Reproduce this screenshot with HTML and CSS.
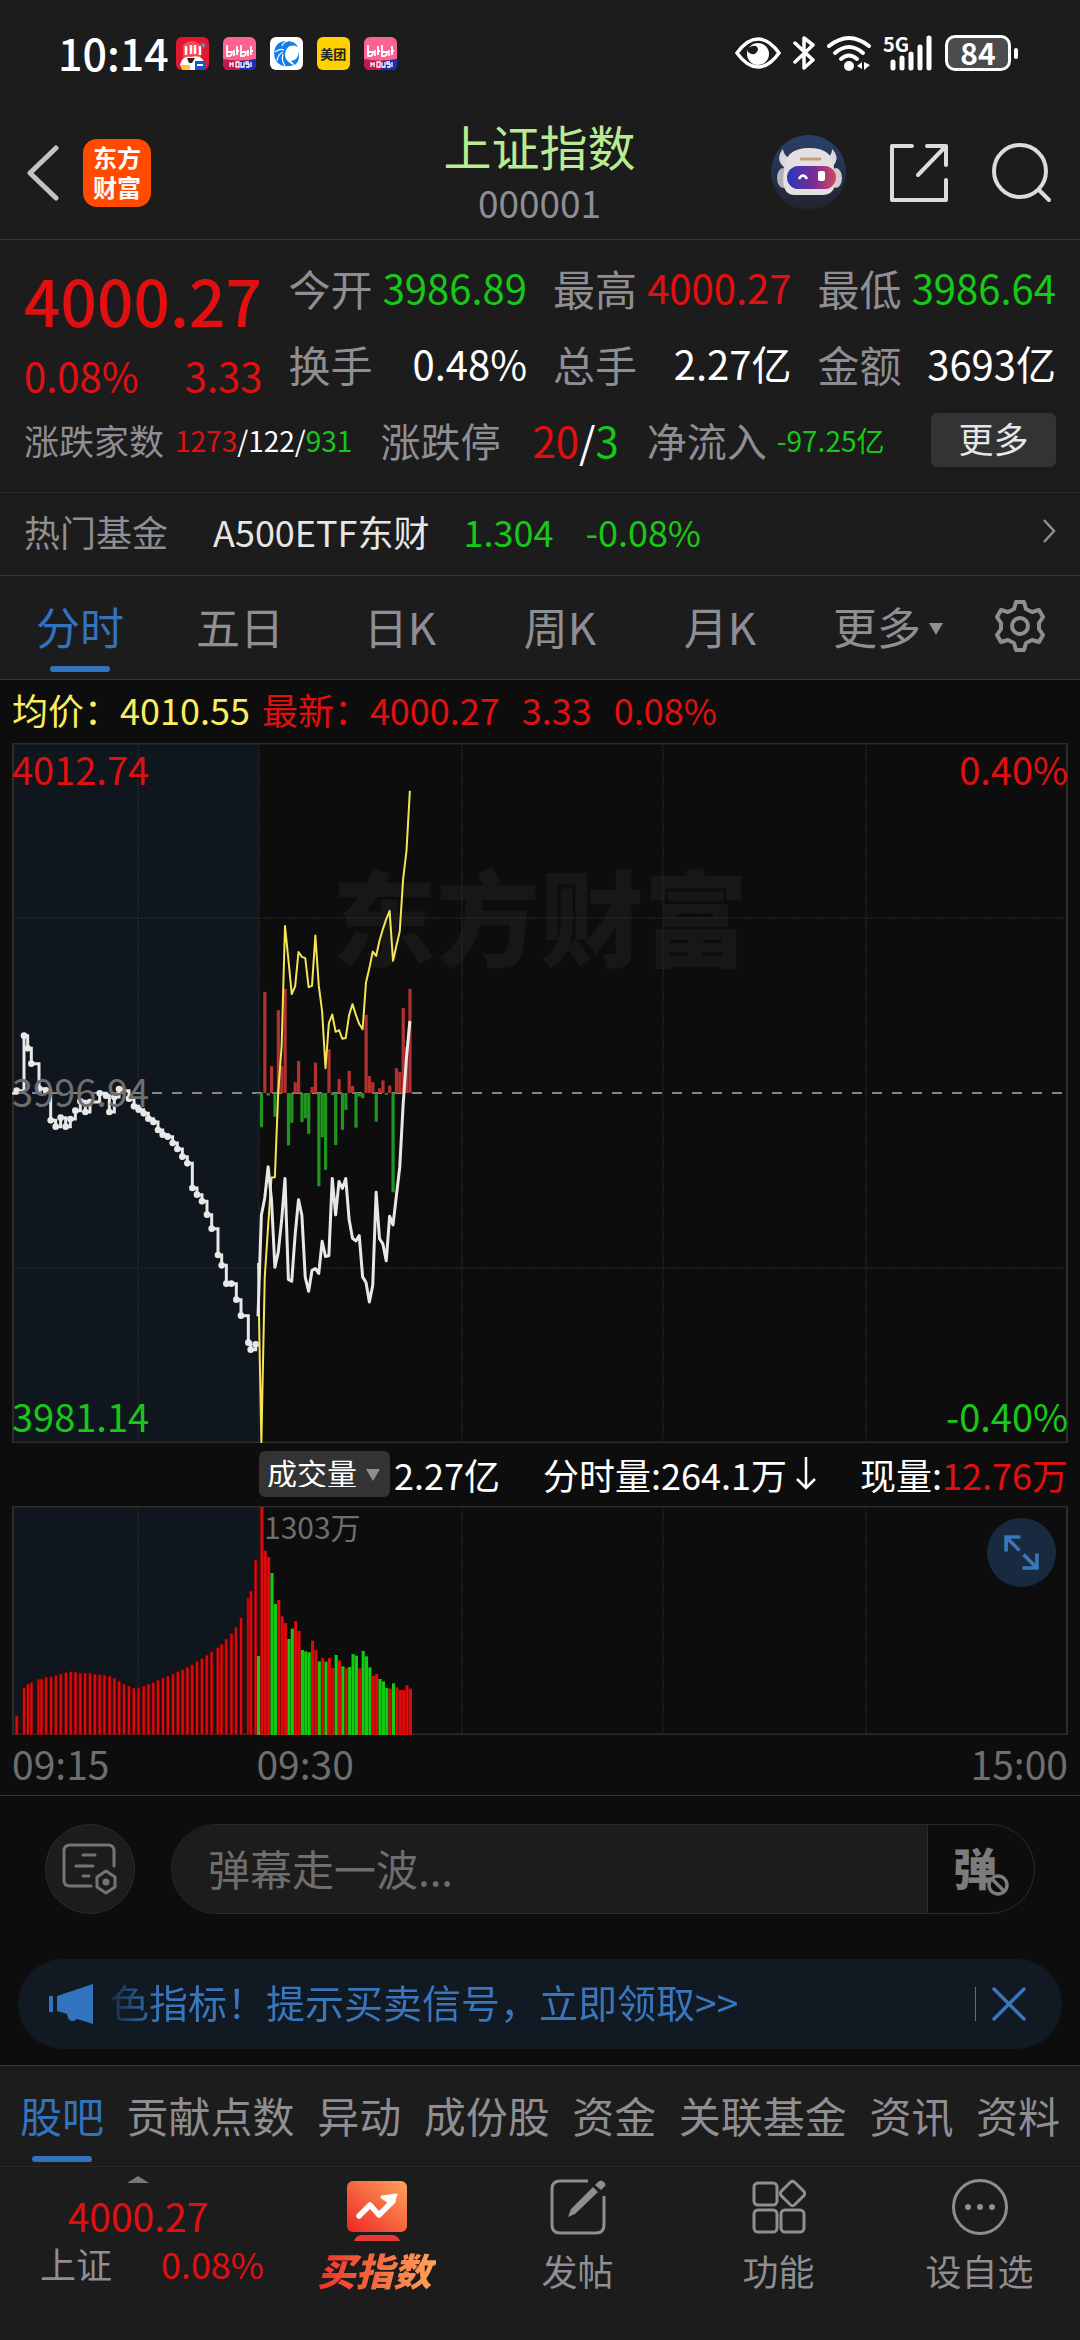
FILE: index.html
```html
<!DOCTYPE html>
<html lang="zh-CN">
<head>
    <meta charset="UTF-8">
    <meta name="viewport" content="width=device-width, initial-scale=1.0">
    <title>上证指数 000001</title>
    <link rel="stylesheet" href="styles.css">
</head>
<body>
    <div class="status-bar">
        <span class="clock">10:14</span>
        <div class="app-icons">
            <svg viewBox="0 0 33 33"><rect width="33" height="33" rx="6" fill="#e5172f"/><path d="M7 8Q16 0 25 8V20H7z" fill="#f5495a"/><path d="M10 9v9M15 8v9M19 8v9M24 9v9" stroke="#fff" stroke-width="2.5"/><path d="M4 28Q6 18 15 20Q27 17 29 28L26 33H7z" fill="#fff"/><path d="M11 21h8l-3 5h-3z" fill="#35211f"/><path d="M5 28h9v5H7q-2-1-2-5z" fill="#ffc62d"/><path d="M19 24h10v9H19z" fill="#1756c9"/><path d="M21 28h6" stroke="#fff" stroke-width="2"/><path d="M25 6l4 1-1 5z" fill="#4ca0e6"/></svg>
            <svg viewBox="0 0 33 33"><rect width="33" height="33" rx="6" fill="#fb6390"/><path d="M0 22q16 3 33 0v5q0 6-6 6H6q-6 0-6-6z" fill="#c51650"/><path d="M17 24q8 0 16-2v5q0 6-6 6H17z" fill="#1730b8"/><path d="M4 8v11q5 1 5-4H4M11 13v6M14 9v9M13 14h3M18 8v11q5 1 5-4h-5M25 13v6M28 9v9M27 14h3" stroke="#fff" stroke-width="1.8" fill="none"/><path d="M7 25v5M7 27h3M10 25v5M13 25h3v5h-3zM18 25v5h3v-5M26 25h-3v2h3v3h-3M28 25v5" stroke="#fff" stroke-width="1.3" fill="none"/></svg>
            <svg viewBox="0 0 33 33"><rect width="33" height="33" rx="6" fill="#fff"/><path d="M4 16Q5 4 17 4Q25 4 28 10Q20 6 16 13Q12 23 24 28Q12 32 6 24Q4 20 4 16z" fill="#137ee8"/><path d="M5 15q5-4 9-2M7 24q1-7 6-9M15 29q-4-6-2-12M18 4q-5 1-6 5" stroke="#fff" stroke-width="1.2" fill="none"/><path d="M21 24q8-1 7-9q3 8-3 13z" fill="#137ee8"/></svg>
            <span class="app-meituan">美团</span>
            <svg viewBox="0 0 33 33"><rect width="33" height="33" rx="6" fill="#fb6390"/><path d="M0 22q16 3 33 0v5q0 6-6 6H6q-6 0-6-6z" fill="#c51650"/><path d="M17 24q8 0 16-2v5q0 6-6 6H17z" fill="#1730b8"/><path d="M4 8v11q5 1 5-4H4M11 13v6M14 9v9M13 14h3M18 8v11q5 1 5-4h-5M25 13v6M28 9v9M27 14h3" stroke="#fff" stroke-width="1.8" fill="none"/><path d="M7 25v5M7 27h3M10 25v5M13 25h3v5h-3zM18 25v5h3v-5M26 25h-3v2h3v3h-3M28 25v5" stroke="#fff" stroke-width="1.3" fill="none"/></svg>
        </div>
        <div class="system-icons">
            <svg width="46" height="34" viewBox="0 0 46 34"><path d="M2 17Q12 3 23 3T44 17Q34 31 23 31T2 17z" fill="none" stroke="#fff" stroke-width="3.5"/><circle cx="23" cy="18" r="11" fill="#fff"/><path d="M13 12q5-3 8-2 4 3 0 7-3 3-8-1z" fill="#1c1c1c"/></svg>
            <svg width="22" height="36" viewBox="0 0 22 36"><path d="M2 8l18 17-9 8V3l9 7L2 27" fill="none" stroke="#fff" stroke-width="3.5" stroke-linejoin="round" stroke-linecap="round"/></svg>
            <svg width="44" height="36" viewBox="0 0 44 36"><g fill="none" stroke="#fff" stroke-width="4" stroke-linecap="round"><path d="M2 11q20-16 40 0"/><path d="M8 18q14-12 28 0"/><path d="M14 24q8-7 16 0"/></g><circle cx="22" cy="31" r="5" fill="#fff"/><path d="M30 31l5-4v7zM37 27v8l6-5z" fill="#fff"/></svg>
            <div class="signal">
                <span class="signal-type">5G</span>
                <svg width="50" height="36" viewBox="0 0 50 36"><path d="M10 27v6M19 23v10M28 19v14M37 12v21M46 3v30" stroke="#fff" stroke-width="5" stroke-linecap="round"/></svg>
            </div>
            <div class="battery"><span>84</span></div>
        </div>
    </div>

    <header class="header">
        <div class="header-left">
            <button class="icon-btn" aria-label="返回"><svg width="32" height="56" viewBox="0 0 32 56"><path d="M29 3L3 28l26 25" fill="none" stroke="#c3c3c3" stroke-width="5" stroke-linecap="round" stroke-linejoin="round"/></svg></button>
            <a class="logo" href="#"><span>东方</span><span>财富</span></a>
        </div>
        <div class="header-title">
            <h1>上证指数</h1>
            <p>000001</p>
        </div>
        <div class="header-right">
            <button class="icon-btn robot" aria-label="智能助手">
                <svg width="75" height="75" viewBox="0 0 75 75">
                    <defs>
                        <linearGradient id="robotBg" x1="0" y1="0" x2="0" y2="1"><stop offset="0" stop-color="#2b4068"/><stop offset="1" stop-color="#20232c"/></linearGradient>
                        <linearGradient id="visor"><stop offset="0" stop-color="#2836b8"/><stop offset=".55" stop-color="#7a2d96"/><stop offset="1" stop-color="#d04860"/></linearGradient>
                    </defs>
                    <circle cx="37.500" cy="37.500" r="37.500" fill="url(#robotBg)"/>
                    <path d="M12 14q-9 11 3 20l10-10q-12 0-13-10zM61 14q10 10-2 20L49 24q12 0 12-10z" fill="#d8d5dc"/>
                    <ellipse cx="12" cy="43" rx="6" ry="10" fill="#b3b0ba"/><ellipse cx="65" cy="43" rx="6" ry="10" fill="#d0ccd2"/>
                    <path d="M13 36Q13 13 38 13T63 34Q68 60 52 60H24Q9 60 13 36z" fill="#e3e0e4"/>
                    <rect x="16" y="31" width="49" height="23" rx="11.500" fill="url(#visor)"/>
                    <path d="M29 24h21" stroke="#cc9a7c" stroke-width="3"/>
                    <path d="M28 44q4-7 8 0" fill="none" stroke="#fff" stroke-width="2.500"/>
                    <rect x="47" y="36" width="7" height="10" rx="2" fill="#fff"/>
                </svg>
            </button>
            <button class="icon-btn" aria-label="分享"><svg width="58" height="58" viewBox="0 0 58 58"><path d="M22 2H2v54h54V36M37 2h19v19M55 3L28 31" fill="none" stroke="#dcdcdc" stroke-width="4" stroke-linecap="round" stroke-linejoin="round"/></svg></button>
            <button class="icon-btn" aria-label="搜索"><svg width="60" height="60" viewBox="0 0 60 60"><circle cx="28" cy="28" r="26" fill="none" stroke="#dcdcdc" stroke-width="4"/><path d="M47 47l10 10" stroke="#dcdcdc" stroke-width="4" stroke-linecap="round"/></svg></button>
        </div>
    </header>

    <section class="quote">
        <div class="quote-top">
            <div class="quote-price">
                <strong class="price up">4000.27</strong>
                <div class="price-change up"><span>0.08%</span><span>3.33</span></div>
            </div>
            <dl class="quote-stats">
                <div><dt>今开</dt><dd class="down">3986.89</dd></div>
                <div><dt>最高</dt><dd class="up">4000.27</dd></div>
                <div><dt>最低</dt><dd class="down">3986.64</dd></div>
                <div><dt>换手</dt><dd>0.48%</dd></div>
                <div><dt>总手</dt><dd>2.27亿</dd></div>
                <div><dt>金额</dt><dd>3693亿</dd></div>
            </dl>
        </div>
        <div class="breadth">
            <span class="breadth-label">涨跌家数</span>
            <span class="breadth-small"><span class="up">1273</span>/122/<span class="down">931</span></span>
            <span class="breadth-name">涨跌停</span>
            <span class="breadth-limit"><span class="up">20</span>/<span class="down">3</span></span>
            <span class="breadth-name">净流入</span>
            <span class="breadth-small down">-97.25亿</span>
            <button class="more-btn">更多</button>
        </div>
    </section>

    <a class="fund" href="#">
        <span class="fund-label">热门基金</span>
        <span class="fund-name">A500ETF东财</span>
        <span class="down">1.304</span>
        <span class="down fund-rate">-0.08%</span>
        <svg class="fund-arrow" width="14" height="26" viewBox="0 0 14 26"><path d="M2 2l10 11L2 24" fill="none" stroke="#8e8e93" stroke-width="2.500"/></svg>
    </a>

    <nav class="period-tabs">
        <button class="active">分时</button>
        <button>五日</button>
        <button>日K</button>
        <button>周K</button>
        <button>月K</button>
        <button class="more-tab">更多<i class="caret"></i></button>
        <button class="settings" aria-label="设置"><svg width="52" height="52" viewBox="0 0 52 52"><path d="M22 2h8l2 7 6 3 7-2 4 7-4 6v6l4 6-4 7-7-2-6 3-2 7h-8l-2-7-6-3-7 2-4-7 4-6v-6l-4-6 4-7 7 2 6-3z" fill="none" stroke="#8e8e93" stroke-width="4" stroke-linejoin="round"/><circle cx="26" cy="26" r="8" fill="none" stroke="#8e8e93" stroke-width="4"/></svg></button>
    </nav>

    <main class="chart">
        <div class="chart-info">
            <span class="avg">均价：4010.55</span>
            <span class="up">最新：4000.27</span>
            <span class="up chart-gap">3.33</span>
            <span class="up chart-gap">0.08%</span>
        </div>

        <div class="plot">
            <span class="watermark">东方财富</span>
            <svg id="priceChart" viewBox="0 0 1056 700"></svg>
            <span class="axis top left up">4012.74</span>
            <span class="axis top right up">0.40%</span>
            <span class="axis middle left">3996.94</span>
            <span class="axis bottom left down">3981.14</span>
            <span class="axis bottom right down">-0.40%</span>
        </div>

        <div class="volume-info">
            <span class="select-wrap">
                <select aria-label="指标"><option>成交量</option></select>
                <i class="caret"></i>
            </span>
            <span>2.27亿</span>
            <span class="minute-volume">分时量:264.1万<svg width="22" height="34" viewBox="0 0 22 34"><path d="M11 0v31M2 22l9 9 9-9" fill="none" stroke="#fff" stroke-width="2.500"/></svg></span>
            <span class="last-volume">现量:<span class="up">12.76万</span></span>
        </div>

        <div class="plot">
            <svg id="volumeChart" viewBox="0 0 1056 229"></svg>
            <span class="volume-max">1303万</span>
            <button class="expand" aria-label="全屏"><svg width="34" height="34" viewBox="0 0 34 34"><path d="M2 16V2h14M2 2l13 13M32 18v14H18M32 32L19 19" fill="none" stroke="#3a76bd" stroke-width="3.500"/></svg></button>
        </div>

        <div class="time-axis"><span>09:15</span><span class="open-time">09:30</span><span>15:00</span></div>
    </main>

    <div class="danmaku">
        <button class="danmaku-list" aria-label="弹幕设置"><svg width="56" height="52" viewBox="0 0 56 52"><g fill="none" stroke="#747474" stroke-width="3" stroke-linecap="round"><path d="M29 43H8q-6 0-6-6V8q0-6 6-6h38q6 0 6 6v15M21 12h12M14 23h17M21 33h6"/><path d="M44 28l9 6v10l-9 6-9-6V34z" stroke-linejoin="round"/></g><circle cx="44" cy="39" r="3.500" fill="#747474"/></svg></button>
        <div class="danmaku-box">
            <input type="text" aria-label="弹幕" placeholder="弹幕走一波...">
            <button class="danmaku-toggle" aria-label="关闭弹幕">弹<svg width="24" height="24" viewBox="0 0 24 24"><circle cx="12" cy="12" r="9" fill="#0d0d0d" stroke="#7c7c7c" stroke-width="3.500"/><path d="M6 6l12 12" stroke="#7c7c7c" stroke-width="3.500"/></svg></button>
        </div>
    </div>

    <div class="notice">
        <svg width="46" height="40" viewBox="0 0 46 40"><path d="M45 0v40L29 35q-6 5-9-1l-1-4-10-3V12zM1 12h4v16H1z" fill="#3273c0"/></svg>
        <a class="notice-text" href="#">色指标！提示买卖信号，立即领取&gt;&gt;</a>
        <button class="notice-close" aria-label="关闭"><svg width="34" height="34" viewBox="0 0 34 34"><path d="M2 2l30 30M32 2L2 32" stroke="#3a76bd" stroke-width="3.500" stroke-linecap="round"/></svg></button>
    </div>

    <nav class="section-tabs">
        <a class="active" href="#">股吧</a>
        <a href="#">贡献点数</a>
        <a href="#">异动</a>
        <a href="#">成份股</a>
        <a href="#">资金</a>
        <a href="#">关联基金</a>
        <a href="#">资讯</a>
        <a href="#">资料</a>
    </nav>

    <footer class="bottom-bar">
        <div class="index-summary">
            <i class="caret-up"></i>
            <span class="index-price up">4000.27</span>
            <div class="index-row"><span>上证</span><span class="up">0.08%</span></div>
        </div>
        <button class="buy">
            <svg width="60" height="60" viewBox="0 0 60 60">
                <defs><linearGradient id="buyBg" x1="0" y1="1" x2="1" y2="0"><stop offset="0" stop-color="#ee2525"/><stop offset="1" stop-color="#ffa45a"/></linearGradient></defs>
                <rect y="0" width="60" height="51" rx="6" fill="url(#buyBg)"/>
                <path d="M7 60q2-6 8-6h30q6 0 8 6z" fill="#e63a32"/>
                <path d="M12 35l11-11 9 10 14-14" fill="none" stroke="#fff" stroke-width="5.500" stroke-linecap="round" stroke-linejoin="round"/><path d="M35 16l14-2-4 9z" fill="#fff" stroke="#fff" stroke-width="3" stroke-linejoin="round"/>
            </svg>
            <span>买指数</span>
        </button>
        <button>
            <svg width="56" height="60" viewBox="0 0 56 60"><path d="M38 2H10q-8 0-8 8v36q0 8 8 8h36q8 0 8-8V17" fill="none" stroke="#8e8e93" stroke-width="3"/><path d="M18 38l3-8 22-22 5 5-23 22zM45 6l3-3q3-3 6 0t0 5l-3 3z" fill="#8e8e93"/></svg>
            <span>发帖</span>
        </button>
        <button>
            <svg width="56" height="60" viewBox="0 0 56 60"><g fill="none" stroke="#8e8e93" stroke-width="3"><rect x="3" y="4" width="23" height="22" rx="4"/><rect x="3" y="31" width="23" height="22" rx="4"/><rect x="30" y="31" width="23" height="22" rx="4"/><rect x="32" y="5" width="19" height="19" rx="3" transform="rotate(45 41.500 14.500)"/></g></svg>
            <span>功能</span>
        </button>
        <button>
            <svg width="56" height="60" viewBox="0 0 56 60"><circle cx="28" cy="28" r="26.500" fill="none" stroke="#8e8e93" stroke-width="3"/><g fill="#8e8e93"><circle cx="16" cy="28" r="3"/><circle cx="28" cy="28" r="3"/><circle cx="40" cy="28" r="3"/></g></svg>
            <span>设自选</span>
        </button>
    </footer>

    <script src="chart.js"></script>
</body>
</html>
```

FILE: styles.css
```css
* {
    box-sizing: border-box;
}
body {
    margin: 0;
    background: #0d0d0d;
    color: #fff;
    font-family: "Noto Sans CJK SC", "Noto Sans", sans-serif;
    font-size: 36px;
    line-height: 1;
}
h1, p, dl, dd {
    margin: 0;
}
button, input, select {
    font-family: inherit;
    color: inherit;
    line-height: inherit;
    border: none;
    background: none;
    padding: 0;
    margin: 0;
    border-radius: 0;
}
a {
    color: inherit;
    text-decoration: none;
}
svg {
    display: block;
    flex: none;
}
.up { color: #e01010; }
.down { color: #18c818; }
.caret {
    display: inline-block;
    border: 7px solid transparent;
    border-top: 12px solid #8e8e93;
    border-bottom: none;
}

/* status bar */
.status-bar {
    display: flex;
    align-items: center;
    height: 106px;
    padding: 0 69px 0 58px;
    background: #1c1c1c;
}
.clock {
    font-size: 43px;
    font-weight: 500;
    padding-bottom: 2px;
}
.app-icons {
    display: flex;
    gap: 14px;
    margin-left: 7px;
}
.app-icons svg,
.app-meituan {
    width: 33px;
    height: 33px;
}
.app-meituan {
    background: #ffd100;
    color: #222;
    border-radius: 6px;
    font-size: 13px;
    font-weight: bold;
    line-height: 33px;
    text-align: center;
}
.system-icons {
    display: flex;
    align-items: center;
    gap: 12px;
    margin-left: auto;
}
.signal {
    position: relative;
}
.signal-type {
    position: absolute;
    left: 0;
    top: 0;
    font-size: 20px;
    line-height: 18px;
    font-weight: bold;
}
.battery {
    position: relative;
    width: 66px;
    height: 36px;
    border: 3px solid #fff;
    border-radius: 10px;
    background: #4c4c4c;
    font-size: 30px;
    line-height: 28px;
    font-weight: bold;
    text-align: center;
}
.battery::after {
    content: "";
    position: absolute;
    right: -10px;
    top: 10px;
    width: 4px;
    height: 11px;
    border-radius: 2px;
    background: #fff;
}

/* header */
.header {
    display: grid;
    grid-template-columns: 1fr auto 1fr;
    align-items: center;
    height: 134px;
    padding: 0 28px 0 27px;
    background: #1c1c1c;
    border-bottom: 1px solid #363636;
}
.header-left,
.header-right {
    display: flex;
    align-items: center;
}
.header-left {
    gap: 24px;
}
.header-right {
    justify-content: flex-end;
    gap: 44px;
}
.logo {
    display: flex;
    flex-direction: column;
    align-items: center;
    width: 68px;
    height: 68px;
    padding: 3px 0;
    border-radius: 14px;
    background: #ff4a00;
    font-size: 24px;
    line-height: 30px;
    font-weight: bold;
}
.header-title {
    padding-bottom: 2px;
    text-align: center;
}
.header-title h1 {
    font-size: 48px;
    line-height: 60px;
    font-weight: normal;
    color: #b9eb92;
}
.header-title p {
    color: #8e8e93;
    font-size: 37px;
    line-height: 54px;
}

/* quote */
.quote {
    padding: 10px 24px 15px;
    background: #1c1c1c;
    border-bottom: 1px solid #282828;
}
.quote-top {
    display: grid;
    grid-template-columns: repeat(4, minmax(0, 1fr));
    column-gap: 26px;
    white-space: nowrap;
}
.price {
    display: block;
    font-size: 64px;
    line-height: 98px;
    font-weight: 500;
}
.price-change {
    display: flex;
    justify-content: space-between;
    font-size: 40px;
    line-height: 54px;
}
.quote-stats {
    display: grid;
    grid-column: span 3;
    grid-template-columns: repeat(3, minmax(0, 1fr));
    column-gap: 26px;
    font-size: 40px;
    line-height: 75px;
}
.quote-stats div {
    display: flex;
    justify-content: space-between;
}
.quote-stats dt {
    font-size: 42px;
    color: #8e8e93;
}
.breadth {
    display: flex;
    align-items: center;
    height: 75px;
    white-space: nowrap;
}
.breadth-label {
    font-size: 35px;
    color: #8e8e93;
    margin-right: 11px;
}
.breadth-small {
    font-size: 28px;
}
.breadth-name {
    font-size: 40px;
    color: #8e8e93;
    margin: 0 10px 0 28px;
}
.breadth-limit {
    font-size: 42px;
    margin-left: 22px;
}
.more-btn {
    width: 125px;
    height: 54px;
    margin-left: auto;
    padding-bottom: 4px;
    border-radius: 6px;
    background: #333;
    color: #e6e6e6;
    font-size: 35px;
}

/* hot fund */
.fund {
    display: flex;
    align-items: center;
    height: 83px;
    padding: 0 24px 6px;
    background: #1c1c1c;
    border-bottom: 1px solid #363636;
}
.fund-label {
    color: #8e8e93;
    margin-right: 45px;
}
.fund-name {
    color: #e6e6e6;
    margin-right: 34px;
}
.fund-rate {
    margin-left: 32px;
}
.fund-arrow {
    margin-left: auto;
}

/* period tabs */
.period-tabs {
    display: flex;
    height: 104px;
    background: #1c1c1c;
    border-bottom: 1px solid #363636;
}
.period-tabs button {
    position: relative;
    flex: 4;
    padding-bottom: 4px;
    font-size: 44px;
    color: #8e8e93;
    white-space: nowrap;
}
.period-tabs .more-tab {
    text-indent: 16px;
}
.period-tabs .caret {
    margin-left: 8px;
    vertical-align: 10px;
}
.period-tabs .settings {
    display: flex;
    flex: 3;
    align-items: center;
    justify-content: center;
}
.period-tabs .active,
.section-tabs .active {
    color: #3273c0;
}
.period-tabs .active::after,
.section-tabs .active::after {
    content: "";
    position: absolute;
    left: 50%;
    bottom: 7px;
    width: 60px;
    height: 6px;
    margin-left: -30px;
    border-radius: 3px;
    background: #3273c0;
}

/* chart */
.chart {
    padding: 0 12px;
    border-bottom: 1px solid #363636;
}
.chart-info {
    display: flex;
    align-items: center;
    height: 63px;
    padding-bottom: 6px;
}
.avg {
    color: #faed5f;
    margin-right: 12px;
}
.chart-gap {
    margin-left: 22px;
}
.plot {
    position: relative;
}
.plot svg {
    width: 100%;
    height: auto;
}
.watermark {
    position: absolute;
    left: 0;
    right: 0;
    top: 106px;
    font-size: 104px;
    line-height: 130px;
    font-weight: 900;
    text-align: center;
    color: #171717;
}
#priceChart {
    position: relative;
}
.axis {
    position: absolute;
    font-size: 38px;
    line-height: 50px;
}
.axis.top { top: 1px; }
.axis.middle { top: 50%; margin-top: -27px; color: #6e6e6e; }
.axis.bottom { bottom: 2px; }
.axis.left { left: 0; }
.axis.right { right: 0; }
.volume-info {
    display: flex;
    align-items: center;
    height: 63px;
    padding-left: 247px;
    padding-bottom: 2px;
    white-space: nowrap;
}
.select-wrap {
    position: relative;
    margin-right: 4px;
}
.select-wrap select {
    appearance: none;
    display: block;
    width: 131px;
    height: 46px;
    padding: 0 8px 3px;
    border-radius: 6px;
    background: #333;
    font-size: 30px;
}
.select-wrap .caret {
    position: absolute;
    right: 10px;
    top: 18px;
}
.minute-volume {
    display: flex;
    align-items: center;
    gap: 8px;
    margin: 0 auto;
}
.volume-max {
    position: absolute;
    left: 252px;
    top: 2px;
    font-size: 30px;
    line-height: 36px;
    color: #6e6e6e;
}
.expand {
    position: absolute;
    right: 12px;
    top: 12px;
    width: 69px;
    height: 69px;
    padding: 17px;
    border-radius: 50%;
    background: #182a40;
}
.time-axis {
    display: flex;
    height: 60px;
    align-items: center;
    padding-bottom: 4px;
    color: #6e6e6e;
    font-size: 39px;
}
.open-time {
    margin: 0 auto 0 147px;
}

/* danmaku */
.danmaku {
    display: flex;
    gap: 36px;
    padding: 28px 45px 45px;
}
.danmaku-list {
    display: flex;
    align-items: center;
    justify-content: center;
    width: 90px;
    height: 90px;
    border: 1px solid #2b2b2b;
    border-radius: 50%;
    background: #1c1c1c;
}
.danmaku-box {
    display: flex;
    flex: 1;
    height: 90px;
    border: 1px solid #2b2b2b;
    border-radius: 45px;
    overflow: hidden;
}
.danmaku-box input {
    flex: 1;
    min-width: 0;
    padding: 0 36px 4px;
    background: #1c1c1c;
    border-right: 1px solid #2b2b2b;
    font-size: 42px;
}
.danmaku-box input::placeholder {
    color: #6e6e6e;
}
.danmaku-toggle {
    position: relative;
    width: 106px;
    padding: 0 12px 4px 0;
    font-size: 44px;
    font-weight: 900;
    color: #7c7c7c;
}
.danmaku-toggle svg {
    position: absolute;
    right: 24px;
    bottom: 16px;
}

/* notice */
.notice {
    display: flex;
    align-items: center;
    height: 90px;
    margin: 0 18px 16px;
    padding: 0 36px 0 30px;
    border-radius: 45px;
    background: #111922;
    color: #3a76bd;
}
.notice-text {
    flex: 1;
    margin-left: 16px;
    padding-bottom: 6px;
    font-size: 39px;
    line-height: 50px;
    -webkit-mask-image: linear-gradient(to right, rgba(0, 0, 0, 0.2), #000 50px);
    mask-image: linear-gradient(to right, rgba(0, 0, 0, 0.2), #000 50px);
}
.notice-close {
    padding-left: 16px;
    border-left: 1px solid #3a76bd;
}

/* section tabs */
.section-tabs {
    display: flex;
    justify-content: space-between;
    padding: 0 20px;
    background: #1c1c1c;
    border-top: 1px solid #363636;
    border-bottom: 1px solid #282828;
    font-size: 42px;
    line-height: 98px;
    white-space: nowrap;
    color: #8e8e93;
}
.section-tabs a {
    position: relative;
    padding-bottom: 2px;
}
.section-tabs .active::after {
    bottom: 4px;
}

/* bottom bar */
.bottom-bar {
    display: flex;
    min-height: 174px;
    background: #1c1c1c;
    color: #8e8e93;
}
.index-summary {
    position: relative;
    width: 276px;
    padding: 24px 12px 0 40px;
}
.caret-up {
    position: absolute;
    left: 127px;
    top: 9px;
    border: 11px solid transparent;
    border-top: none;
    border-bottom: 7px solid #77777b;
}
.index-price {
    display: block;
    padding-right: 28px;
    font-size: 39px;
    line-height: 48px;
    text-align: center;
}
.index-row {
    display: flex;
    justify-content: space-between;
    line-height: 48px;
}
.bottom-bar button {
    display: flex;
    flex: 1;
    flex-direction: column;
    align-items: center;
    padding-top: 12px;
    font-size: 36px;
}
.bottom-bar button span {
    line-height: 46px;
    padding-top: 8px;
}
.bottom-bar .buy {
    padding-top: 14px;
}
.bottom-bar .buy span {
    padding-top: 6px;
    padding-right: 4px;
    font-size: 38px;
    font-weight: 900;
    font-style: italic;
    color: transparent;
    background: linear-gradient(to right, #ee2f2a, #ffa45a);
    -webkit-background-clip: text;
    background-clip: text;
}
```

FILE: chart.js
```js
const OPEN_X = 246;
const STEP = 3.375;
const RED = '#dc0a0a';
const GREEN = '#10cc10';

// call auction ticks: x, y
const auction = [
    [37, 334], [50, 326], [72, 161], [83, 199], [94, 245], [117, 320], [138, 326], [152, 415], [167, 434],
    [182, 407], [197, 434], [211, 411], [226, 386], [241, 358], [256, 390], [270, 360], [299, 334], [318, 341],
    [328, 390], [343, 345], [357, 321], [366, 326], [387, 350], [402, 373], [416, 383], [431, 394], [445, 410],
    [460, 420], [474, 444], [488, 458], [503, 464], [518, 483], [532, 501], [547, 524], [562, 544], [577, 618],
    [591, 638], [606, 658], [621, 698], [635, 740], [654, 819], [665, 850], [679, 905], [694, 905], [709, 953],
    [723, 1001], [745, 1082], [752, 1103], [767, 1087]
];

// one value per minute from 09:30
const price = [
    1278, 1045, 1005, 933, 1010, 1165, 1130, 1057, 960, 1193, 1197, 1090, 1009, 1045, 1188, 1220, 1172, 1168, 1179,
    1105, 1140, 1138, 960, 1044, 967, 983, 960, 1055, 1098, 1104, 1092, 1187, 1200, 1245, 1206, 992, 1099, 1111,
    1150, 1047, 1067, 1000, 934, 790, 680, 597
];
const average = [
    1155, 1568, 1188, 1070, 958, 957, 760, 655, 378, 455, 535, 517, 438, 449, 452, 519, 516, 400, 515, 575, 706, 602,
    582, 622, 618, 638, 636, 583, 558, 583, 604, 616, 508, 475, 437, 447, 412, 385, 362, 343, 458, 424, 390, 270,
    204, 66
];
// bars round the previous close, above 765 is green
const force = [
    765, 842, 530, 769, 701, 818, 572, 701, 523, 884, 832, 738, 689, 830, 821, 857, 749, 693, 978, 865, 940, 662, 768,
    883, 731, 848, 802, 712, 747, 843, 771, 775, 583, 724, 738, 829, 752, 734, 767, 746, 992, 706, 714, 567, 657, 523
];

const auctionVolume = [
    [48, 850], [70, 766], [81, 756], [91, 751], [112, 741], [120, 741], [134, 735], [148, 733], [162, 730],
    [176, 726], [191, 721], [205, 718], [219, 720], [233, 723], [247, 723], [261, 723], [275, 726], [289, 727],
    [303, 729], [318, 732], [332, 738], [346, 747], [360, 756], [374, 762], [388, 768], [402, 768], [417, 762],
    [431, 756], [445, 751], [459, 744], [473, 738], [487, 732], [502, 726], [516, 718], [530, 712], [544, 705],
    [558, 697], [572, 688], [586, 679], [600, 669], [614, 659], [632, 646], [643, 636], [657, 621], [672, 604],
    [685, 585], [700, 557], [721, 497], [728, 477], [742, 383]
];
const volume = [
    672, 225, 356, 375, 423, 516, 504, 553, 573, 621, 590, 567, 597, 654, 658, 661, 626, 654, 688, 678, 689, 678, 708,
    669, 685, 703, 709, 705, 666, 671, 709, 657, 673, 706, 732, 726, 741, 748, 768, 770, 754, 766, 774, 774, 760, 770
];
const volumeColor = 'grrrggrrrggrrgggrrgrgrrgrgrgggrgggrrgggrgrrrrr';

const priceY = v => (v + 44) / 1614 * 700;
const minuteX = i => OPEN_X + i * STEP;

function rect(x, y, w, h, fill, extra = '') {
    return `<rect x="${x}" y="${y}" width="${w}" height="${h}" fill="${fill}" ${extra}/>`;
}

function grid(height, rows) {
    let out = rect(0, 0, 247, height, '#0f161d');
    let d = '';
    [126, 247, 450, 651, 854].forEach(x => d += `M${x} 0V${height}`);
    rows.forEach(y => d += `M0 ${y}H1056`);
    out += `<path d="${d}" stroke="#2b2d2f" stroke-width="1" stroke-dasharray="2 1"/>`;
    out += `<rect x="1" y="0.5" width="1054" height="${height - 1}" fill="none" stroke="#2c2c2c" stroke-width="2"/>`;
    return out;
}

function line(values, color, width) {
    const points = values.map((v, i) => `${minuteX(i)},${priceY(v)}`).join(' ');
    return `<polyline points="${points}" fill="none" stroke="${color}" stroke-width="${width}" stroke-linejoin="round"/>`;
}

function drawPrice() {
    let out = grid(700, [175, 525]);
    out += '<path d="M0 350H1056" stroke="#858585" stroke-width="2" stroke-dasharray="10 10"/>';

    force.forEach((v, i) => {
        const y = priceY(v);
        out += rect(minuteX(i) - 1.5, Math.min(y, 350), 3.2, Math.abs(y - 350), v > 765 ? '#1f961f' : '#b23232');
    });

    let d = '';
    auction.forEach(([x, y], i) => {
        const px = x / 3 - 12;
        const py = 239 + y / 3;
        d += i ? `H${px}V${py}` : `M${px} ${py}`;
        out += i ? `<circle cx="${px}" cy="${py}" r="3.3" fill="#e8e8e8"/>` : '';
    });
    out += `<path d="${d}" fill="none" stroke="#e8e8e8" stroke-width="3"/>`;
    out += line(average, '#f3e556', 2);
    out += line(price, '#e8e8e8', 3);
    document.getElementById('priceChart').innerHTML = out;
}

function drawVolume() {
    let out = grid(229, []);
    auctionVolume.forEach(([x, y]) => {
        const h = (909 - y) / 3;
        out += rect(x / 2.904 - 13.5, 229 - h, 3.2, h, RED, 'stroke="#4a0808" stroke-width="0.8"');
    });
    volume.forEach((v, i) => {
        const h = (909 - v) / 3;
        out += rect(minuteX(i) - 1, 229 - h, 3.1, h, volumeColor[i] === 'g' ? GREEN : RED);
    });
    document.getElementById('volumeChart').innerHTML = out;
}

drawPrice();
drawVolume();
```
